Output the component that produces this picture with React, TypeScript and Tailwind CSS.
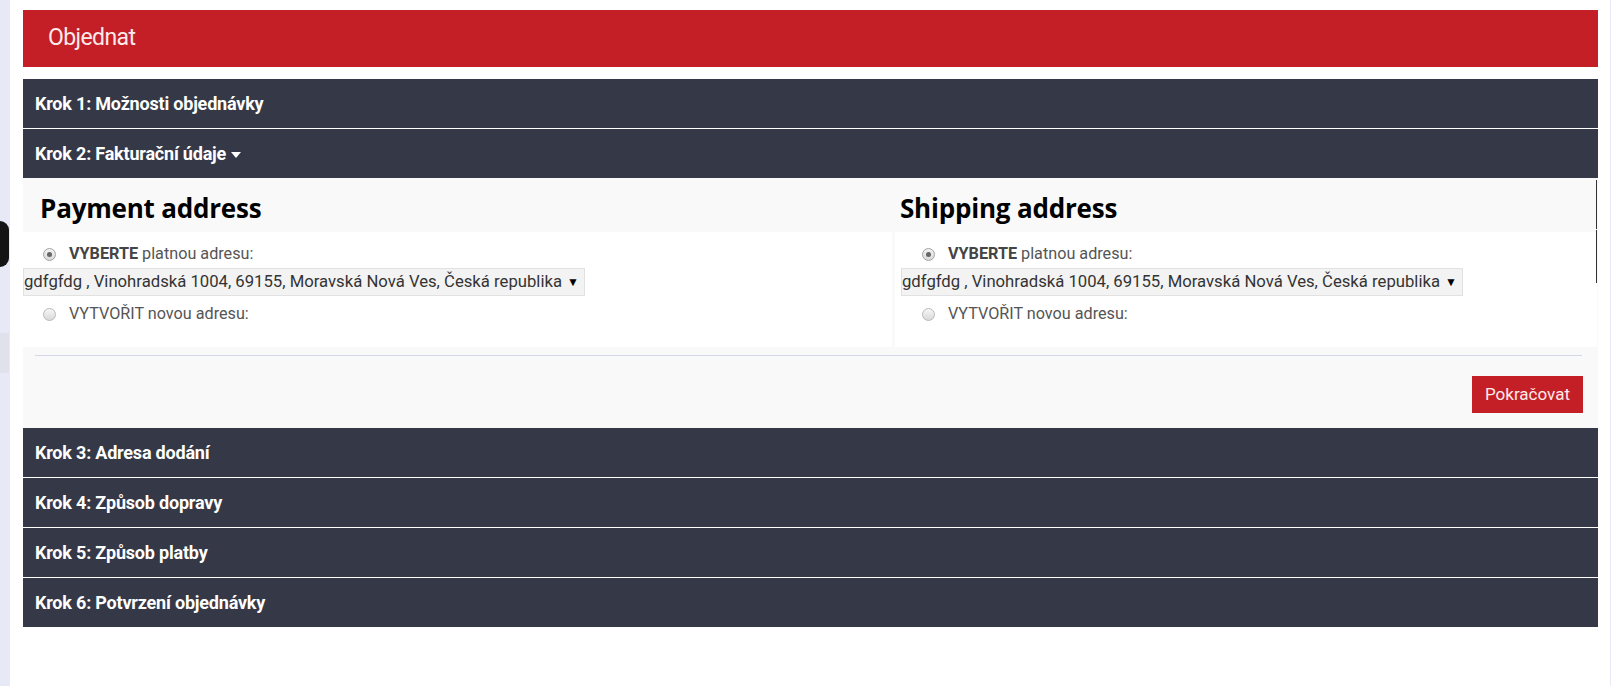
import React from "react";

const steps = [
  "Krok 1: Možnosti objednávky",
  "Krok 2: Fakturační údaje",
  "Krok 3: Adresa dodání",
  "Krok 4: Způsob dopravy",
  "Krok 5: Způsob platby",
  "Krok 6: Potvrzení objednávky",
];

const address = "gdfgfdg , Vinohradská 1004, 69155, Moravská Nová Ves, Česká republika";

function Radio({ checked }: { checked?: boolean }) {
  return (
    <span
      className={
        checked
          ? "flex h-[13px] w-[13px] items-center justify-center rounded-full border border-[#a3a3a3] bg-gradient-to-b from-[#f3f3f3] to-[#d9d9d9]"
          : "flex h-[13px] w-[13px] items-center justify-center rounded-full border border-[#b9b9b9] bg-gradient-to-b from-[#f6f6f6] to-[#dadada]"
      }
    >
      {checked && <span className="h-[5px] w-[5px] rounded-full bg-[#666]" />}
    </span>
  );
}

function StepBar({ label, open, gap }: { label: string; open?: boolean; gap?: boolean }) {
  return (
    <div className={`flex h-[49px] items-center bg-[#353846] pl-[12px] ${gap ? "mt-px" : ""}`}>
      <span className="text-[18px] font-bold tracking-[-0.2px] text-white">{label}</span>
      {open && (
        <svg className="ml-[5px] mt-[2px]" width="10" height="6" viewBox="0 0 10 6">
          <path d="M0 0h10L5 6z" fill="#fff" />
        </svg>
      )}
    </div>
  );
}

function AddressForm({ title, radioPad, selectPad, headPad }: { title: string; radioPad: string; selectPad: string; headPad: string }) {
  return (
    <div>
      <h2 className={`h-[28px] font-['Open_Sans',sans-serif] text-[26px] font-bold leading-[28px] tracking-[-0.2px] text-black ${headPad}`}>
        {title}
      </h2>
      <div className="mt-[10px] h-[115px] bg-white pt-[12px]">
        <div className={`flex h-[20px] items-center gap-[13px] text-[16.2px] text-[#555] ${radioPad}`}>
          <Radio checked />
          <span>
            <b className="font-bold text-[#444]">VYBERTE</b> platnou adresu:
          </span>
        </div>
        <div className={selectPad}>
          <div className="mt-[4px] flex h-[28px] w-[562px] items-center border border-[#e1e1e1] bg-[#f3f3f3] text-[16.7px] text-[#333]">
            <span className="whitespace-nowrap">{address}</span>
            <span className="ml-auto pr-[5px] text-[12px] text-black">▼</span>
          </div>
        </div>
        <div className={`mt-[8px] flex h-[20px] items-center gap-[13px] text-[16.2px] text-[#555] ${radioPad}`}>
          <Radio />
          <span>VYTVOŘIT novou adresu:</span>
        </div>
      </div>
    </div>
  );
}

export default function App() {
  return (
    <div className="relative flex min-h-[686px] bg-white font-['Roboto',sans-serif]">
      <div className="w-[10px] shrink-0 bg-[#e7e9f6]" />
      <div className="absolute left-0 top-[221px] h-[46px] w-[9px] rounded-r-[10px] bg-[#141414]" />
      <div className="absolute left-0 top-[333px] h-[40px] w-[9px] bg-[#e0e1ea]" />

      <div className="ml-[13px] w-[1575px] pt-[10px]">
        <div className="flex h-[57px] items-center bg-[#c41f26] pl-[25px]">
          <span className="text-[23px] tracking-[-0.6px] text-[#fbeaea]">Objednat</span>
        </div>

        <div className="mt-[12px]">
          <StepBar label={steps[0]} />
          <StepBar label={steps[1]} open gap />

          <div className="relative h-[250px] bg-[#f9f9f9] pt-[16px]">
            <div className="flex gap-[3px]">
              <div className="w-[869px]">
                <AddressForm title="Payment address" headPad="pl-[17px]" radioPad="pl-[20px]" selectPad="" />
              </div>
              <div className="w-[702px]">
                <AddressForm title="Shipping address" headPad="pl-[5px]" radioPad="pl-[27px]" selectPad="pl-[6px]" />
              </div>
            </div>
            <div className="ml-[12px] mt-[8px] h-px w-[1547px] bg-[#d4d7ea]" />
            <div className="mt-[20px] flex justify-end pr-[15px]">
              <button className="h-[37px] w-[111px] bg-[#c41f26] text-[17px] text-[#fbeaea]">Pokračovat</button>
            </div>
            <div className="absolute right-px top-[2px] h-[49px] w-px bg-[#333]" />
            <div className="absolute right-px top-[52px] h-[53px] w-px bg-[#333]" />
          </div>

          <StepBar label={steps[2]} />
          <StepBar label={steps[3]} gap />
          <StepBar label={steps[4]} gap />
          <StepBar label={steps[5]} gap />
        </div>
      </div>
      <div className="ml-auto w-px shrink-0 bg-[#e7e9f6]" />
    </div>
  );
}
